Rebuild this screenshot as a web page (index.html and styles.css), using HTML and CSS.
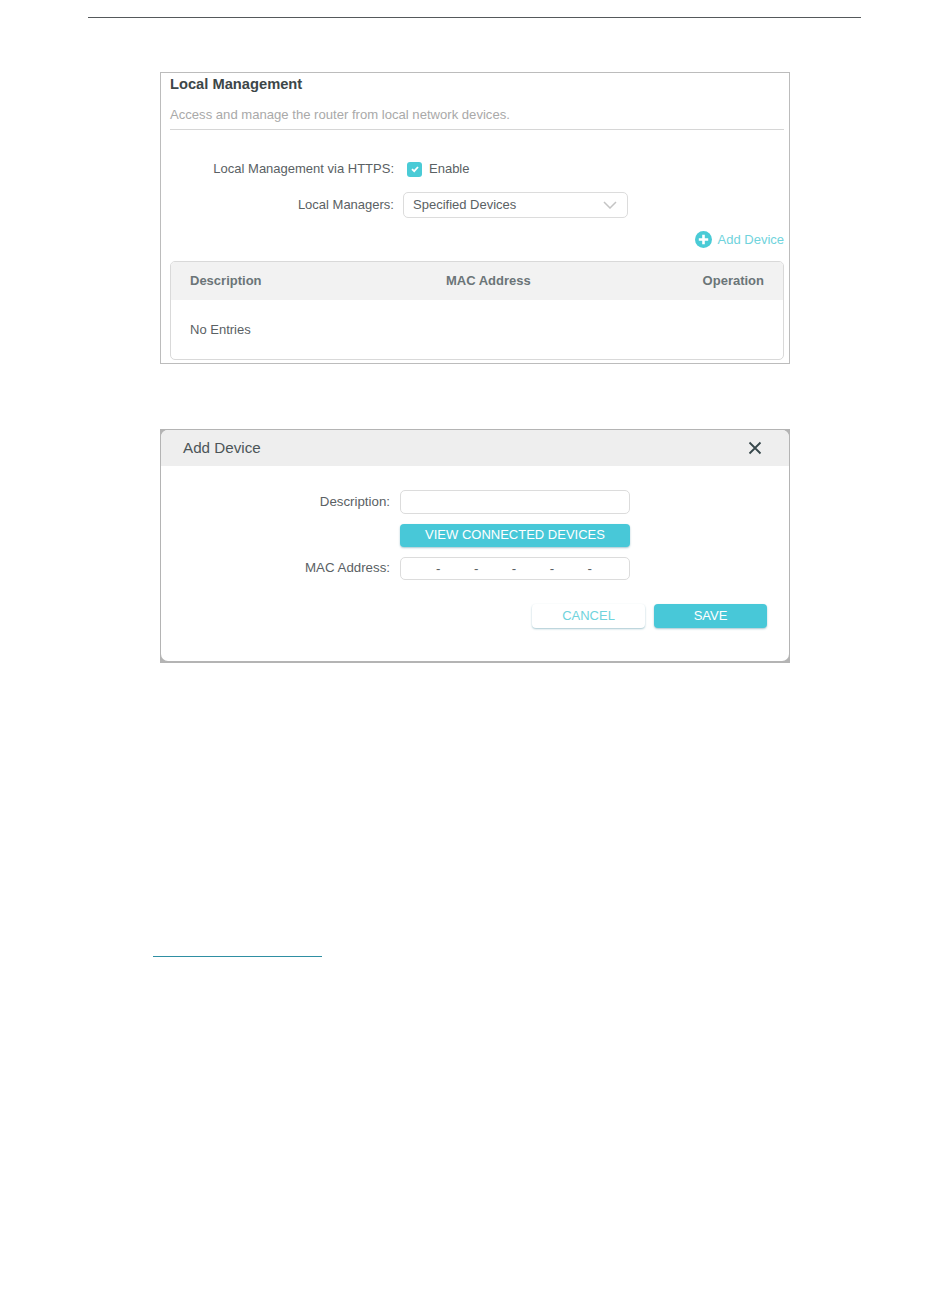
FILE: index.html
```html
<!DOCTYPE html>
<html lang="en">
<head>
    <meta charset="UTF-8">
    <meta name="viewport" content="width=device-width, initial-scale=1.0">
    <title>Local Management</title>
    <link rel="stylesheet" href="styles.css">
</head>
<body>
    <div class="page-rule"></div>

    <!-- Local Management panel -->
    <div class="shot panel">
        <h2 class="panel-title">Local Management</h2>
        <p class="panel-note">Access and manage the router from local network devices.</p>

        <div class="row row-https">
            <span class="row-label">Local Management via HTTPS:</span>
            <span class="checkbox">
                <svg width="10" height="10" viewBox="0 0 10 10"><path d="M2 5.2 L4.2 7.2 L8 3" fill="none" stroke="#fff" stroke-width="1.8"/></svg>
            </span>
            <span class="check-text">Enable</span>
        </div>
        <div class="row row-managers">
            <span class="row-label">Local Managers:</span>
            <div class="select">
                <span>Specified Devices</span>
                <svg width="14" height="8" viewBox="0 0 14 8"><path d="M1 1 L7 7 L13 1" fill="none" stroke="#c4c4c4" stroke-width="1.5"/></svg>
            </div>
        </div>

        <div class="add-line">
            <svg width="17" height="17" viewBox="0 0 17 17"><circle cx="8.5" cy="8.5" r="8.5" fill="#4acbd6"/><path d="M8.5 3.8 V13.2 M3.8 8.5 H13.2" stroke="#fff" stroke-width="2.6"/></svg>
            <span>Add Device</span>
        </div>

        <div class="table">
            <div class="table-head">
                <span>Description</span>
                <span>MAC Address</span>
                <span>Operation</span>
            </div>
            <div class="table-empty">No Entries</div>
        </div>
    </div>

    <!-- Add Device dialog -->
    <div class="shot dialog">
        <div class="dialog-box">
            <div class="dialog-head">
                <span>Add Device</span>
                <svg width="14" height="14" viewBox="0 0 14 14"><path d="M1.5 1.5 L12.5 12.5 M12.5 1.5 L1.5 12.5" stroke="#37474b" stroke-width="1.8"/></svg>
            </div>
            <div class="dialog-form">
                <span class="form-label">Description:</span>
                <div class="input input-desc"></div>
                <div class="btn btn-view">VIEW CONNECTED DEVICES</div>
                <span class="form-label">MAC Address:</span>
                <div class="input mac">
                    <span>-</span><span>-</span><span>-</span><span>-</span><span>-</span>
                </div>
            </div>
            <div class="dialog-actions">
                <div class="btn btn-cancel">CANCEL</div>
                <div class="btn btn-save">SAVE</div>
            </div>
        </div>
    </div>

    <div class="footnote-rule"></div>
</body>
</html>
```

FILE: styles.css
```css
body {
    margin: 0;
    height: 1297px;
    overflow: hidden;
    background-color: white;
    font-family: "Liberation Sans", Arial, sans-serif;
    font-size: 13px;
    color: #5a6164;
}
.page-rule {
    width: 773px;
    height: 1px;
    margin: 17px 0 0 88px;
    background-color: #55595b;
}
.shot {
    box-sizing: border-box;
    width: 630px;
    margin-left: 160px;
}
/* Local Management panel */
.panel {
    height: 292px;
    margin-top: 54px;
    padding: 0 5px 3px 9px;
    border: 1px solid #bcbcbc;
}
.panel-title {
    margin: 3px 0 0;
    font-size: 14.7px;
    line-height: 17px;
    color: #3c4648;
}
.panel-note {
    margin: 14px 0 0;
    padding-bottom: 6px;
    font-size: 13.1px;
    line-height: 16px;
    color: #a9a9a9;
    border-bottom: 1px solid #d6d6d6;
}
.row {
    display: flex;
    align-items: center;
}
.row-label {
    width: 224px;
    padding-bottom: 2px;
    text-align: right;
}
.row-https {
    height: 16px;
    margin-top: 31px;
}
.checkbox {
    display: flex;
    align-items: center;
    justify-content: center;
    width: 15px;
    height: 15px;
    margin-left: 13px;
    border-radius: 3px;
    background-color: #4acbd6;
}
.check-text {
    margin-left: 7px;
    padding-bottom: 2px;
}
.row-managers {
    margin-top: 15px;
}
.select {
    box-sizing: border-box;
    display: flex;
    align-items: center;
    justify-content: space-between;
    width: 225px;
    height: 26px;
    margin-left: 9px;
    padding: 0 10px 0 9px;
    border: 1px solid #dcdcdc;
    border-radius: 5px;
}
.select span {
    padding-bottom: 2px;
}
.add-line {
    display: flex;
    align-items: center;
    justify-content: flex-end;
    gap: 6px;
    height: 17px;
    margin-top: 13px;
    color: #6fd3dc;
}
.table {
    box-sizing: border-box;
    height: 99px;
    margin-top: 13px;
    border: 1px solid #d9d9d9;
    border-radius: 5px;
    overflow: hidden;
}
.table-head {
    display: grid;
    grid-template-columns: 256px 1fr auto;
    align-items: center;
    height: 38px;
    padding: 0 19px;
    background-color: #f2f2f2;
    font-weight: bold;
    color: #6b7578;
}
.table-head span {
    padding-bottom: 2px;
}
.table-empty {
    padding: 22px 19px 0;
    line-height: 15px;
}
/* Add Device dialog: the grey shows in the corners behind the rounded box */
.dialog {
    height: 234px;
    margin-top: 65px;
    padding: 1px 1px 2px;
    background-color: #b4b4b4;
}
.dialog-box {
    height: 100%;
    background-color: #fff;
    border-radius: 7px;
}
.dialog-head {
    display: flex;
    align-items: center;
    justify-content: space-between;
    height: 36px;
    padding: 0 27px 0 22px;
    background-color: #eeeeee;
    border-radius: 7px 7px 0 0;
    font-size: 15.2px;
    color: #4c5558;
}
.dialog-head span {
    padding-bottom: 2px;
}
.dialog-form {
    display: grid;
    grid-template-columns: 229px 230px;
    column-gap: 10px;
    row-gap: 10px;
    align-items: center;
    margin-top: 24px;
    font-size: 13.3px;
}
.form-label {
    padding-bottom: 2px;
    text-align: right;
}
.input {
    box-sizing: border-box;
    height: 24px;
    border: 1px solid #dcdcdc;
    border-radius: 5px;
}
.btn {
    box-sizing: border-box;
    display: flex;
    align-items: center;
    justify-content: center;
    padding-bottom: 2px;
    border-radius: 4px;
    font-size: 13px;
    color: #fff;
    background-color: #48c8d8;
    box-shadow: 0 1px 2px rgba(60, 130, 150, 0.45);
}
.btn-view {
    grid-column: 2;
    height: 23px;
}
.mac {
    display: flex;
    justify-content: space-between;
    align-items: center;
    height: 23px;
    padding: 0 37px 0 35px;
}
.dialog-actions {
    display: flex;
    justify-content: flex-end;
    gap: 9px;
    margin-top: 24px;
    padding-right: 22px;
}
.btn-cancel,
.btn-save {
    width: 113px;
    height: 24px;
}
.btn-cancel {
    background-color: #fff;
    color: #6fd3dc;
}
.footnote-rule {
    width: 169px;
    height: 1px;
    margin: 293px 0 0 153px;
    background-color: #2f8fa3;
}
```
